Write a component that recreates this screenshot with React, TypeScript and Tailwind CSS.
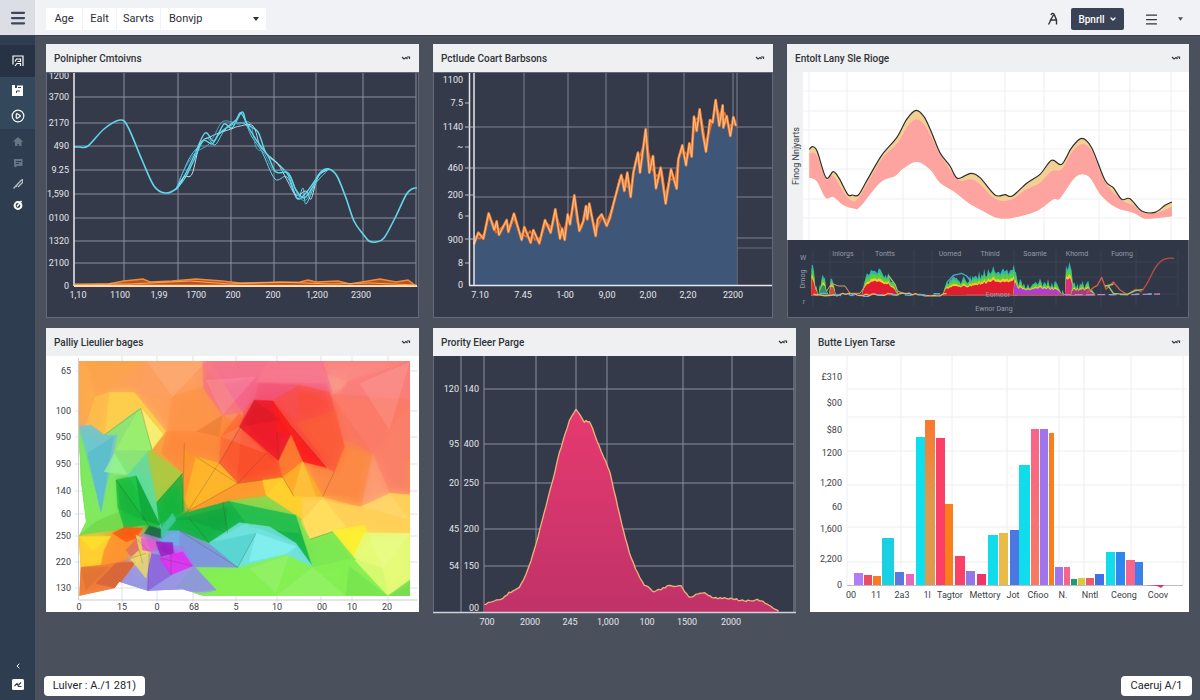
import React from 'react';
import { Menu, CirclePlay, ChevronDown, ChevronLeft } from 'lucide-react';

type Point = [number, number];

// Catmull-Rom spline through the given points
function smooth(pts: Point[]) {
  let d = `M${pts[0][0]},${pts[0][1]}`;
  for (let i = 0; i < pts.length - 1; i++) {
    const p0 = pts[i - 1] || pts[i];
    const p1 = pts[i];
    const p2 = pts[i + 1];
    const p3 = pts[i + 2] || p2;
    d += `C${p1[0] + (p2[0] - p0[0]) / 6},${p1[1] + (p2[1] - p0[1]) / 6} ${p2[0] - (p3[0] - p1[0]) / 6},${p2[1] - (p3[1] - p1[1]) / 6} ${p2[0]},${p2[1]}`;
  }
  return d;
}

const noise = (n: number) => {
  const s = Math.sin(n * 12.9898) * 43758.5453;
  return s - Math.floor(s);
};

function parse(s: string): Point[] {
  return s.split(' ').map((p) => p.split(',').map(Number) as Point);
}

// adds small deterministic steps between points
function rough(pts: Point[], step: number, amp: number): Point[] {
  const out: Point[] = [];
  for (let i = 0; i < pts.length - 1; i++) {
    const [x1, y1] = pts[i];
    const [x2, y2] = pts[i + 1];
    const n = Math.max(1, Math.round((x2 - x1) / step));
    for (let k = 0; k < n; k++) {
      const t = k / n;
      out.push([x1 + (x2 - x1) * t, y1 + (y2 - y1) * t + (noise(x1 + k * 7) - 0.5) * amp]);
    }
  }
  out.push(pts[pts.length - 1]);
  return out;
}

interface PanelProps {
  title: string;
  children: React.ReactNode;
}

function Panel({ title, children }: PanelProps) {
  return (
    <section className="min-w-0">
      <header className="flex h-7 items-center justify-between bg-[#eff0f1] px-2">
        <h2 className="text-[10px] font-medium text-[#2f3238]">{title}</h2>
        <button type="button" aria-label="Collapse" className="text-[#33363c]">
          <svg viewBox="0 0 10 6" className="h-[6px] w-[10px]" fill="none" stroke="currentColor" strokeWidth="1.2">
            <path d="M1 2 L3 4 L5 2.5 L6.5 4 M6 2 H8.5 V4" />
          </svg>
        </button>
      </header>
      {children}
    </section>
  );
}

interface ChartProps {
  box: string;
  label: string;
  dark?: boolean;
  children: React.ReactNode;
}

function Chart({ box, label, dark, children }: ChartProps) {
  return (
    <svg
      viewBox={box}
      role="img"
      aria-label={label}
      className={dark ? 'block h-auto w-full bg-[#353a4a]' : 'block h-auto w-full bg-white'}
    >
      {children}
    </svg>
  );
}

interface GridProps {
  xs: number[];
  ys: number[];
  x1: number;
  x2: number;
  y1: number;
  y2: number;
  color: string;
}

function Grid({ xs, ys, x1, x2, y1, y2, color }: GridProps) {
  return (
    <g stroke={color} strokeWidth="1">
      {xs.map((x) => <line key={`x${x}`} x1={x} x2={x} y1={y1} y2={y2} />)}
      {ys.map((y) => <line key={`y${y}`} x1={x1} x2={x2} y1={y} y2={y} />)}
    </g>
  );
}

interface TicksProps {
  items: [number, string][];
  x?: number;
  y?: number;
  color: string;
}

// pass x for a vertical axis, y for a horizontal one
function Ticks({ items, x, y, color }: TicksProps) {
  return (
    <g fill={color} className="text-[9px]" textAnchor={x !== undefined ? 'end' : 'middle'}>
      {items.map(([pos, text], i) => (
        <text key={i} x={x !== undefined ? x : pos} y={(y !== undefined ? y : pos) + 3}>{text}</text>
      ))}
    </g>
  );
}

const WAVE = parse('74,147 79,147 88,146 104,129 120,120 128,127 142,160 154,186 165,193 176,189 183,180');
const WAVE_MIDS = [
  '176,189 186,173 194,156 205,133 214,141 224,124 232,128 242,112 247,124 258,132 266,153 277,163 288,175 297,198 305,194 314,182 320,173 329,169',
  '176,189 189,159 199,146 207,138 215,145 224,131 234,124 245,124 252,137 262,152 275,179 287,177 297,199 303,188 306,204 316,183 329,169',
  '176,189 184,177 192,174 200,144 210,137 219,133 231,129 240,126 253,126 260,146 267,154 278,164 287,180 296,195 306,191 311,199 318,177 329,169',
  '176,189 183,172 190,160 196,152 208,145 214,136 222,122 232,122 238,124 250,123 256,147 264,153 273,170 282,170 290,175 298,195 306,200 315,184 329,169',
  '176,189 185,178 193,162 203,141 212,144 218,135 226,128 236,120 241,113 249,128 257,141 268,156 276,172 288,173 296,190 304,198 312,188 321,172 329,169',
];
const WAVE_END = parse('316,180 322,171 329,169 337,176 346,198 354,221 363,234 369,241 376,242 384,238 395,218 406,195 412,189 417,188');

function WaveChart() {
  return (
    <Chart box="46 72 373 246" label="Line chart" dark>
      <Grid xs={[124, 178, 231, 274, 316, 363, 416]} ys={[97, 123, 146, 170, 194, 218, 241, 263]} x1={74} x2={416} y1={72} y2={286} color="#8a8f9c" />
      <g fill="none" stroke="#5fd8ec" strokeWidth="1.6" strokeLinejoin="round">
        <path d={smooth(WAVE)} />
        {WAVE_MIDS.map((m, i) => (
          <path key={i} d={smooth(parse(m))} strokeWidth={i === 0 || i === 4 ? 1.4 : 1} stroke={i === 2 ? '#b9dcea' : i === 3 ? '#4aa8c6' : '#5fd8ec'} />
        ))}
        <path d={smooth(WAVE_END)} />
      </g>
      <path d="M74 285 L108 284 L124 281 L143 279 L150 282 L172 281 L196 279 L222 281 L240 283 L300 282 L308 280 L316 282 L338 281 L350 284 L380 279 L396 282 L408 280 L416 286 Z" fill="#b8541f" stroke="#f58b3a" strokeWidth="1.4" />
      <path d="M74 72 V286" fill="none" stroke="#eceef2" strokeWidth="1.5" />
      <path d="M74 286 H417" fill="none" stroke="#ffdcb4" strokeWidth="2" />
      <path d="M74 284 H130 L150 283 L190 281 L230 284 L280 282 L330 284 L370 283 L416 285" fill="none" stroke="#ffa84e" strokeWidth="1" />
      <Ticks x={69} color="#e4e6ec" items={[[76, '1200'], [97, '3700'], [123, '2170'], [146, '490'], [170, '9.25'], [194, '1,590'], [218, '0100'], [241, '1320'], [263, '2100'], [286, '0']]} />
      <Ticks y={295} color="#e4e6ec" items={[[78, '1,10'], [120, '1100'], [159, '1,99'], [196, '1700'], [233, '200'], [273, '200'], [317, '1,200'], [361, '2300']]} />
      <rect x="46.5" y="72.5" width="372" height="245" fill="none" stroke="#646a7a" />
    </Chart>
  );
}

const PEAKS = '132,625 145,590 160,608 176,532 193,582 200,556 207,597 230,552 235,588 252,533 275,612 283,573 302,620 310,582 328,622 345,552 362,590 376,520 390,608 396,578 404,612 413,535 420,565 433,478 448,585 460,555 468,510 472,550 478,503 497,600 503,550 515,535 530,570 540,545 550,505 562,460 574,417 583,465 592,410 602,483 610,410 624,350 630,410 647,280 658,410 669,360 678,457 692,395 707,503 723,400 740,458 745,370 757,328 768,388 778,322 785,362 792,242 800,285 809,220 818,290 828,347 840,252 848,260 857,192 868,270 878,208 880,275 890,240 901,300 910,243 918,270';
const PEAKS_BACK = '132,600 150,608 165,590 176,540 188,560 198,590 214,575 228,560 240,575 252,545 268,590 290,602 300,585 315,612 332,605 348,560 366,575 376,530 386,560 400,590 412,550 424,540 433,490 442,560 455,575 466,540 480,520 488,555 500,580 515,545 532,555 545,520 556,485 568,430 580,430 590,450 604,460 616,380 628,365 640,330 648,300 656,350 666,400 680,420 696,405 706,480 718,430 735,430 748,355 762,345 774,360 786,320 796,250 806,245 815,250 826,320 838,290 850,240 858,210 866,230 874,250 884,230 896,270 906,265 918,255';

function GrowthChart() {
  return (
    <Chart box="433 72 340 246" label="Area chart" dark>
      <Grid xs={[524, 568, 606, 648, 684, 733, 737]} ys={[127, 168, 197, 238]} x1={474} x2={773} y1={72} y2={286} color="#7d8290" />
      <line x1="737" x2="773" y1="248" y2="248" stroke="#676c7b" />
      <g transform="translate(430 36) scale(0.33333)" strokeLinejoin="round">
        <polygon points={`132,748 ${PEAKS} 920,748`} fill="#3e5778" />
        <polyline points={PEAKS_BACK} fill="none" stroke="#e56a24" strokeWidth="5" />
        <polyline points={PEAKS} fill="none" stroke="#ee7d33" strokeWidth="8" />
        <polyline points={PEAKS} fill="none" stroke="#ffc48c" strokeWidth="3" />
      </g>
      <path d="M469.5 72 V285 M474 72 V285 M469 285.5 H773" fill="none" stroke="#e6e8ed" strokeWidth="1.5" />
      <path d="M465 103 H469 M465 127 H474 M465 147 H469 M465 168 H474 M465 195 H474 M465 216 H469 M465 239 H474 M465 263 H469" stroke="#b9bdc7" />
      <Ticks x={463} color="#e4e6ec" items={[[80, '1100'], [103, '7.5'], [127, '1140'], [147, '~'], [168, '460'], [195, '200'], [216, '6'], [240, '900'], [263, '8'], [285, '0']]} />
      <Ticks y={295} color="#e4e6ec" items={[[480, '7.10'], [523, '7.45'], [565, '1-00'], [607, '9,00'], [648, '2,00'], [688, '2,20'], [733, '2200']]} />
      <rect x="433.5" y="72.5" width="339" height="245" fill="none" stroke="#646a7a" />
    </Chart>
  );
}

const RANGE_LINE = parse('88,340 98,332 112,347 138,425 160,407 178,428 203,475 218,477 235,477 260,435 305,358 350,305 380,250 408,223 432,242 455,290 480,350 510,390 533,427 572,412 600,425 645,477 675,476 697,480 740,442 780,415 815,373 845,385 875,335 905,307 935,335 975,433 1000,455 1025,490 1050,488 1085,525 1125,529 1155,508 1176,498');
const RANGE_TOP = parse('88,352 110,358 138,430 160,420 203,484 235,486 305,370 350,325 380,275 408,250 432,265 455,305 480,355 533,430 572,430 600,445 645,488 690,492 740,460 780,440 815,405 845,400 875,350 905,325 935,345 975,438 1025,492 1060,508 1085,528 1125,532 1176,512');
const RANGE_BOTTOM = parse('1176,541 1100,548 1060,530 1010,515 965,480 930,425 905,415 880,430 840,487 820,490 770,525 700,545 650,545 600,520 565,500 520,465 480,440 450,400 410,377 370,397 345,420 300,440 240,512 220,517 190,507 160,483 137,485 110,435 88,425');

function RangeChart() {
  const line = smooth(RANGE_LINE);
  const bottom = smooth(RANGE_BOTTOM).slice(1);
  return (
    <Chart box="787 72 402 168" label="Range chart">
      <Grid xs={[809, 847, 903, 951, 1005, 1044, 1099, 1130, 1171]} ys={[91, 111, 130, 149, 169, 199, 218]} x1={803} x2={1187} y1={72} y2={240} color="#edeff1" />
      <rect x="787" y="72" width="16" height="168" fill="#f0f1f3" />
      <g transform="translate(780 36) scale(0.33333)">
        <path d={`${line} L${bottom} Z`} fill="#f3cf94" />
        <path d={`${smooth(RANGE_TOP)} L${bottom} Z`} fill="#fda3a0" />
        <path d={line} fill="none" stroke="#2e2a2a" strokeWidth="3.5" />
      </g>
      <text x="799" y="156" transform="rotate(-90 799 156)" textAnchor="middle" fill="#3a3d44" className="text-[9px]">Finog Nnjyarts</text>
    </Chart>
  );
}

const BURSTS = [
  { pts: '93,178 95,85 102,120 110,160 114,178', low: '#e02a3c' },
  { pts: '116,178 122,140 132,122 138,150 146,178', low: '#2f8f6a' },
  { pts: '146,178 152,140 160,132 166,165 172,178', low: '#c0504a' },
  { pts: '245,178 252,140 265,120 285,98 300,112 325,118 345,150 356,178', low: '#e01c30' },
  { pts: '488,178 497,145 530,132 570,132 605,118 640,100 665,112 690,106 705,98 712,178', low: '#e01c30' },
  { pts: '700,178 704,105 712,140 740,148 780,140 820,146 840,160 852,178', low: '#b03cd0' },
  { pts: '855,178 858,92 872,92 878,140 888,178', low: '#d8307c' },
  { pts: '872,178 880,150 900,150 925,146 935,165 950,178', low: '#a83a88' },
];
const LAYERS: [string, number, number][] = [
  ['#2fb4b4', 1.05, 26],
  ['#58cf3c', 0.9, 22],
  ['#f0cc32', 0.7, 16],
];

function OverviewChart() {
  return (
    <Chart box="787 240 402 78" label="Overview" dark>
      <rect x="787" y="240" width="402" height="78" fill="#303848" />
      <Grid xs={[813, 830, 863, 914, 932, 1014, 1056, 1101, 1136, 1178]} ys={[262, 277, 294]} x1={813} x2={1178} y1={250} y2={306} color="#3b4353" />
      <g transform="translate(780 236) scale(0.33333)" strokeLinejoin="round">
        {BURSTS.map((b) => (
          <g key={b.pts}>
            {[...LAYERS, [b.low, 0.58, 12] as [string, number, number]].map(([color, share, amp]) => (
              <polygon
                key={color}
                fill={color}
                points={rough(parse(b.pts), 4, amp).map(([x, y]) => `${x},${Math.min(178, 178 - (178 - y) * share)}`).join(' ')}
              />
            ))}
          </g>
        ))}
        <g fill="none" strokeWidth="4">
          <polyline points={rough(parse('100,176 250,176 360,174 480,178 500,172'), 9, 8).map((p) => p.join(',')).join(' ')} stroke="#f0b070" />
          <polyline points="140,165 155,142 175,150 195,150 210,172 240,172 255,150" stroke="#d8a060" strokeWidth="3" />
          <polyline points="325,118 345,145 352,165 375,174" stroke="#9fc860" />
          <polyline points={rough(parse('120,174 240,178 380,174 480,174'), 14, 8).map((p) => p.join(',')).join(' ')} stroke="#58b6e0" strokeDasharray="20 24" />
          <polyline points="500,140 520,118 545,112 560,120 572,135" stroke="#4aa8c6" />
          <polyline points="560,176 700,176 860,176" stroke="#e03c6c" strokeWidth="3" />
          <polyline points="850,176 1040,176 1140,174" stroke="#d07cc8" strokeDasharray="24 10" />
          <polyline points="990,176 1030,175 1125,174" stroke="#68b8dc" strokeDasharray="12 26" />
          <path d="M920 170 L940 155 L952 148 L965 124 L978 160 L1000 138 L1020 162 L1042 176 L1068 160 L1085 168" stroke="#d8584a" />
          <path d="M975 150 L1000 145 M985 150 L1000 172 L1040 176 L1066 164 L1090 160" stroke="#9cc868" />
          <path d="M1085 165 C1110 140 1115 100 1140 78 C1150 68 1165 65 1182 67" stroke="#c04a40" />
        </g>
      </g>
      <g fill="#969ba8" className="text-[7px]" textAnchor="middle">
        <text x="843" y="256">Inlorgs</text>
        <text x="885" y="256">Tontts</text>
        <text x="950" y="256">Uomed</text>
        <text x="990" y="256">Thinid</text>
        <text x="1035" y="256">Soamle</text>
        <text x="1077" y="256">Khomd</text>
        <text x="1122" y="256">Fuomg</text>
        <text x="998" y="297">Eomoor</text>
        <text x="994" y="311">Ewnor Dang</text>
        <text x="803" y="260">W</text>
        <text x="805" y="279" transform="rotate(-90 805 279)">Dmog</text>
        <text x="804" y="304">r</text>
      </g>
      <path d="M787.5 240 V317.5 H1188.5 V240" fill="none" stroke="#646a7a" />
    </Chart>
  );
}

const FACETS: [string, string][] = [
  ['#fda05a', '128,123 520,123 620,280 600,500 380,500 128,330'],
  ['#fdb04a', '128,123 150,123 178,230 128,322'],
  ['#fca64a', '150,123 330,123 178,230'],
  ['#fd9f62', '330,123 512,123 500,200 410,230 300,217'],
  ['#fd9245', '500,200 560,285 480,335 395,335 410,230'],
  ['#fb8a84', '860,123 1122,123 1122,240 1010,400 880,215'],
  ['#f9a08c', '860,160 935,185 890,225'],
  ['#fa7a78', '935,185 1122,125 1122,240 905,235'],
  ['#fb7660', '885,222 1122,240 1010,400 925,380'],
  ['#fb8068', '1122,240 1122,525 1062,520 1010,400'],
  ['#fc9c74', '1010,400 1062,520 975,560'],
  ['#fc8a44', '925,360 1010,400 975,560 860,530 800,425 895,455'],
  ['#f4668a', '500,123 860,123 890,220 790,195 700,243 655,240 610,278 560,285 503,205'],
  ['#f77a90', '500,123 720,125 660,170 570,190 515,160'],
  ['#f98090', '700,123 860,123 870,190 660,185'],
  ['#f45070', '655,240 670,190 790,195 780,300 710,243'],
  ['#fd8433', '390,335 480,335 560,285 615,320 550,430 480,410 440,465 375,400'],
  ['#fc5a30', '610,278 690,400 745,472 605,490 550,430 555,350'],
  ['#fb4d2c', '610,320 728,422 740,472 605,490 550,430'],
  ['#fa4e40', '710,243 790,195 880,215 925,380 895,455 865,440 770,325'],
  ['#fc6038', '780,310 900,270 925,380 895,455'],
  ['#ee1c2a', '655,240 710,243 735,300 765,345 728,422 610,320'],
  ['#fb1c1e', '722,335 765,345 800,425 870,442 770,325 710,243'],
  ['#fd7a30', '728,422 765,345 800,425 740,472'],
  ['#fdd24c', '220,217 295,217 390,335 350,390 315,265 205,345 188,330'],
  ['#fdbe4a', '178,230 220,217 205,345 150,315'],
  ['#f4f478', '315,265 382,345 348,390'],
  ['#f9a23a', '390,335 375,400 440,460 348,390'],
  ['#84e878', '205,345 310,265 348,390 275,465 235,400 240,345'],
  ['#9cf070', '310,265 348,390 240,390'],
  ['#80ea60', '128,330 150,410 195,575 215,450 240,480 262,625 130,640 150,600'],
  ['#6cc8d0', '130,320 165,315 205,345 243,345 232,400 195,575 155,400'],
  ['#5cbccc', '155,400 232,350 195,575'],
  ['#94f292', '235,400 275,465 205,455'],
  ['#62dc9c', '275,465 335,395 365,560 375,625'],
  ['#a8cc40', '335,395 345,390 440,460 362,545'],
  ['#74d84a', '250,575 262,625 130,645 180,605'],
  ['#1abf40', '240,480 300,468 372,615 320,615 265,625 245,560'],
  ['#10a83a', '300,468 372,615 320,600'],
  ['#14b43c', '440,460 442,575 370,612 362,548'],
  ['#fd9630', '445,390 480,410 450,575 440,465'],
  ['#feb628', '480,410 548,430 605,490 460,572 447,540'],
  ['#fd9a2e', '445,580 605,490 740,472 690,530 580,543'],
  ['#ffd02e', '680,480 740,472 770,525 870,550 800,600 690,525'],
  ['#fdac2a', '740,472 800,425 860,530 770,525'],
  ['#fec23c', '800,425 840,530 770,525'],
  ['#12b344', '375,655 410,600 450,578 580,543 640,560 780,585 830,740 780,670 630,608 520,668 430,632'],
  ['#2cc050', '580,543 780,585 790,640 640,620'],
  ['#8cd84c', '580,543 690,528 800,600 780,585'],
  ['#ffd058', '800,535 975,560 1062,520 1122,525 1122,640 890,632 822,658 800,600'],
  ['#ffe060', '860,535 930,620 822,658 800,600'],
  ['#fdf030', '890,632 985,615 1000,650 950,715'],
  ['#e6fb78', '985,640 1122,640 1122,790 1055,828 950,715'],
  ['#d4f870', '950,715 1040,745 1055,828'],
  ['#7ce852', '780,585 822,658 890,635 960,720 830,742'],
  ['#84f052', '478,742 605,742 750,702 830,742 950,715 1055,828 500,828 540,810'],
  ['#78e450', '940,740 1055,828 930,828'],
  ['#74dc50', '1122,780 1122,828 1055,828'],
  ['#70e2de', '520,668 610,608 700,620 780,670 830,740 750,702 605,742'],
  ['#58d4d0', '520,668 660,640 605,742'],
  ['#82f0f0', '660,640 780,680 750,702 640,725'],
  ['#7e97dc', '430,632 530,680 605,742 475,740 430,690 370,660'],
  ['#70b0e8', '370,660 390,632 430,632 430,690'],
  ['#9898e4', '250,785 300,735 340,700 370,690 475,740 540,810 335,812'],
  ['#8c9ad4', '475,740 540,810 420,805'],
  ['#8c64dc', '340,700 370,705 410,762 335,812'],
  ['#a07cf0', '400,675 440,680 475,740 430,700'],
  ['#ffd030', '130,650 225,650 205,690 195,735 135,742'],
  ['#fde02c', '130,650 225,650 170,690'],
  ['#f07c38', '133,742 200,735 300,725 240,805 130,828'],
  ['#d4643a', '240,730 300,725 240,805 180,790'],
  ['#fd9630', '205,690 230,640 290,655 270,720 195,735'],
  ['#fb5a10', '230,640 265,622 320,625 300,655 270,665'],
  ['#e0705c', '270,690 310,650 320,690 290,715'],
  ['#ead86a', '300,645 330,660 345,700 330,775 298,735 282,715 310,690'],
  ['#186844', '340,618 375,628 378,655 325,640'],
  ['#e858d4', '315,655 360,665 350,695 320,690'],
  ['#9c1cc4', '360,665 410,668 412,700 375,710'],
  ['#e22cf0', '370,715 440,695 470,738 405,764'],
  ['#40cc98', '375,625 410,580 420,600 375,655'],
];

// broad colour zones under the facets
const ZONES: [string, string][] = [
  ['#fd9a50', '128,123 620,123 620,500 380,500 128,400'],
  ['#fa7468', '600,123 1122,123 1122,560 600,500'],
  ['#fd9a38', '440,400 1122,420 1122,600 440,600'],
  ['#7de05c', '128,330 350,280 450,560 380,660 128,660'],
  ['#1cb848', '370,540 800,540 830,680 370,680'],
  ['#ffdc50', '790,530 1122,520 1122,660 800,660'],
  ['#8cec58', '470,650 1122,650 1122,828 470,828'],
  ['#fba034', '128,645 320,625 320,740 128,828'],
  ['#9890e0', '250,700 320,640 480,640 545,815 250,815'],
];

const SEAMS = 'M445,370 L440,570 M548,430 L455,575 M605,490 L445,580 M480,410 L605,490 M615,320 L550,430 M728,422 L722,335 M690,400 L605,490 M740,472 L605,490 M770,325 L870,442 M740,472 L775,530 M315,265 L348,390 M362,548 L440,460 M430,632 L605,742 M605,742 L660,640 M460,595 L520,668 M560,545 L575,640 M375,715 L470,738 M405,700 L405,764 M340,700 L335,812 M300,655 L345,700 M282,715 L330,700 M310,690 L320,730 M860,530 L895,455 M822,658 L890,635 M240,480 L340,618 M205,345 L315,265';

function MeshChart() {
  return (
    <Chart box="46 356 373 256" label="Mesh map">
      <defs>
        <filter id="blend">
          <feGaussianBlur stdDeviation="14" />
        </filter>
        <clipPath id="region">
          <polygon points="128,123 1122,123 1122,828 500,828 440,808 335,812 250,785 235,805 130,828 134,742 128,650 150,605 134,480 128,330" />
        </clipPath>
      </defs>
      <Grid xs={[122, 157, 193, 236, 277, 321, 352, 388]} ys={[371, 411, 437, 464, 491, 514, 536, 562, 588]} x1={75} x2={417} y1={356} y2={602} color="#dfe1e4" />
      <g transform="translate(36 320) scale(0.33333)" strokeLinejoin="round">
        <g clipPath="url(#region)">
          {ZONES.map(([color, points]) => <polygon key={points} points={points} fill={color} />)}
          <g filter="url(#blend)">
            {FACETS.map(([color, points]) => <polygon key={points} points={points} fill={color} />)}
          </g>
          {FACETS.map(([color, points], i) => (
            <polygon key={points} points={points} fill={color} stroke={color} strokeWidth="1.5" opacity={i < 21 ? 0.45 : 0.85} />
          ))}
          <g fill="#ffffff" fillOpacity="0.1">
            <polygon points="330,123 512,123 410,230" />
            <polygon points="510,180 660,170 560,285" />
            <polygon points="555,350 610,320 690,400" />
            <polygon points="970,190 1122,125 1060,330" />
            <polygon points="1062,520 1122,600 975,560" />
            <polygon points="1000,650 1122,640 1040,745" />
            <polygon points="640,745 760,705 720,820" />
            <polygon points="830,742 930,828 720,828" />
          </g>
          <g fill="#000000" fillOpacity="0.05">
            <polygon points="245,480 300,560 320,600 250,570" />
            <polygon points="410,600 575,560 570,640 460,600" />
            <polygon points="655,240 735,300 615,320" />
            <polygon points="130,740 220,740 150,810" />
            <polygon points="480,335 560,285 550,350" />
          </g>
          <path d={SEAMS} fill="none" stroke="#4a3a18" strokeOpacity="0.35" strokeWidth="2" />
        </g>
      </g>
      <path d="M78.5 358 V600 H417" fill="none" stroke="#c9ccd1" />
      <Ticks x={71} color="#3b3e45" items={[[371, '65'], [411, '100'], [437, '950'], [464, '950'], [491, '140'], [514, '60'], [536, '250'], [562, '220'], [588, '130']]} />
      <Ticks y={607} color="#3b3e45" items={[[79, '0'], [122, '15'], [157, '0'], [194, '68'], [236, '5'], [277, '10'], [322, '00'], [352, '10'], [387, '20']]} />
    </Chart>
  );
}

const HILL = parse('175,853 225,838 255,815 280,803 300,765 315,720 330,670 360,560 380,480 400,400 430,300 450,267 462,285 475,305 490,303 500,325 520,380 552,455 575,560 610,700 635,760 655,795 685,815 705,807 730,797 765,798 788,833 810,822 830,818 870,835 920,836 960,843 1000,840 1035,858 1058,874');

function HillChart() {
  const edge = rough(HILL, 6, 6).map((p) => p.join(',')).join(' ');
  return (
    <svg viewBox="433 356 363 256" role="img" aria-label="Distribution chart" className="block h-auto w-full overflow-visible bg-[#353a4a]">
      <defs>
        <linearGradient id="hill" x1="0" y1="0" x2="0" y2="1">
          <stop offset="0" stopColor="#e63a70" />
          <stop offset="1" stopColor="#c03268" />
        </linearGradient>
      </defs>
      <Grid xs={[461, 484, 536, 576, 607, 683, 732, 794]} ys={[389, 444, 483, 529, 566]} x1={484} x2={794} y1={356} y2={612} color="#8a8f9c" />
      <g transform="translate(426 320) scale(0.33333)">
        <polygon points={`175,876 ${edge} 1058,876`} fill="url(#hill)" />
        <polyline points={edge} fill="none" stroke="#f0b07c" strokeWidth="4" strokeLinejoin="round" />
      </g>
      <line x1="433" x2="796" y1="612.5" y2="612.5" stroke="#d0d3da" strokeWidth="1.5" />
      <path d="M433.5 356 V612 M795.5 356 V612" stroke="#646a7a" />
      <Ticks x={459} color="#e4e6ec" items={[[389, '120'], [444, '95'], [483, '20'], [529, '45'], [566, '54']]} />
      <Ticks x={479} color="#e4e6ec" items={[[389, '140'], [444, '400'], [483, '250'], [529, '200'], [566, '150'], [608, '00']]} />
      <Ticks y={622} color="#e4e6ec" items={[[487, '700'], [530, '2000'], [570, '245'], [608, '1,000'], [647, '100'], [687, '1500'], [731, '2000']]} />
    </svg>
  );
}

// x, width, top, colour
const BARS: [number, number, number, string][] = [
  [854, 9, 573, '#b07cf8'],
  [864, 8, 575, '#ef4a5e'],
  [873, 8, 576, '#f97a20'],
  [882, 12, 538, '#1cd0e4'],
  [895, 9, 572, '#5a78e0'],
  [906, 8, 574, '#e868c0'],
  [916, 9, 437, '#0ce0ee'],
  [925, 10, 420, 'url(#amber)'],
  [936, 9, 438, '#fb4068'],
  [945, 8, 504, '#fb7e1c'],
  [955, 10, 556, '#fb4068'],
  [966, 9, 571, '#9078e8'],
  [977, 9, 574, '#f03468'],
  [988, 10, 535, '#10dcec'],
  [999, 9, 533, '#e8bc48'],
  [1010, 9, 530, '#4a78e0'],
  [1019, 11, 465, '#10dcec'],
  [1031, 8, 429, 'url(#coral)'],
  [1040, 8, 429, '#a074ea'],
  [1049, 5, 433, '#fb7e1c'],
  [1055, 8, 567, '#a074ea'],
  [1064, 6, 567, '#f9648a'],
  [1071, 6, 579, '#18a070'],
  [1078, 7, 578, '#dcc840'],
  [1086, 8, 578, '#ef5a68'],
  [1095, 9, 574, '#4070e8'],
  [1106, 9, 552, '#10dcec'],
  [1116, 9, 552, '#2c88f0'],
  [1126, 9, 560, '#f9648a'],
  [1135, 8, 562, '#3c80ec'],
];

function BarChart() {
  return (
    <Chart box="810 356 379 256" label="Bar chart">
      <defs>
        <linearGradient id="amber" x1="0" y1="0" x2="0" y2="1">
          <stop offset="0" stopColor="#fb7830" />
          <stop offset="0.5" stopColor="#de9850" />
        </linearGradient>
        <linearGradient id="coral" x1="0" y1="0" x2="0" y2="1">
          <stop offset="0" stopColor="#f9648a" />
          <stop offset="1" stopColor="#f97a60" />
        </linearGradient>
      </defs>
      <Grid xs={[847, 901, 952, 1007, 1059, 1084, 1131, 1183]} ys={[389, 417, 451, 485, 527, 562]} x1={847} x2={1187} y1={356} y2={585} color="#eceef0" />
      {BARS.map(([x, w, top, color]) => <rect key={x} x={x} y={top} width={w} height={585 - top} fill={color} />)}
      <path d="M847 585.5 H1183" stroke="#b9bcc2" />
      <path d="M1146 585 H1164 L1161 588 L1157 586 Z" fill="#e03468" />
      <Ticks x={842} color="#3b3e45" items={[[377, '£310'], [403, '$00'], [430, '$80'], [453, '1200'], [483, '1,200'], [507, '60'], [529, '1,600'], [559, '2,200'], [585, '0']]} />
      <Ticks y={595} color="#3b3e45" items={[[851, '00'], [876, '11'], [902, '2a3'], [927, '1l'], [950, 'Tagtor'], [985, 'Mettory'], [1013, 'Jot'], [1038, 'Cfioo'], [1063, 'N.'], [1090, 'Nntl'], [1124, 'Ceong'], [1158, 'Coov']]} />
    </Chart>
  );
}

function Sidebar() {
  return (
    <aside className="flex w-[35px] shrink-0 flex-col bg-[#2e3e50] pt-[9px] text-white">
      <button type="button" aria-label="Dashboard" className="flex h-8 items-center justify-center bg-[#273344]">
        <svg viewBox="0 0 12 12" className="size-3" fill="none" stroke="currentColor" strokeWidth="1.2">
          <path d="M1 9.5 V1 H11 V11 M3 11 L5 8.5 H8.5 V11 M3 6.5 L4.5 4 H8.5 V6.5 H5.5" />
        </svg>
      </button>
      <div className="flex flex-col bg-[#33485a]">
        <button type="button" aria-label="Save" className="flex h-[26px] items-center justify-center">
          <svg viewBox="0 0 11 11" className="size-[11px]">
            <path d="M0 0 H3 V3 H5 V0.5 H11 V11 H0 Z" fill="currentColor" />
            <path d="M6 2.5 H9 M4.5 6 H8 M4.5 6 V8" stroke="#33485a" strokeWidth="1" fill="none" />
          </svg>
        </button>
        <button type="button" aria-label="Play" className="flex h-[26px] items-center justify-center">
          <CirclePlay className="size-[14px]" />
        </button>
      </div>
      <nav className="flex flex-col pt-[2px]">
        <button type="button" aria-label="Home" className="flex h-[21px] items-center justify-center text-[#657584]">
          <svg viewBox="0 0 10 10" className="size-[10px]" fill="currentColor">
            <path d="M5 0 L10 4.5 L8.5 5 V9 H6 V7 H4.5 V9 H2 V5 L0 4.5 Z" />
          </svg>
        </button>
        <button type="button" aria-label="Messages" className="flex h-[21px] items-center justify-center text-[#657584]">
          <svg viewBox="0 0 10 10" className="size-[10px]">
            <path d="M1 1 H9.5 V8 H4 L2.5 9.5 L1 8 Z" fill="currentColor" />
            <path d="M3 3.5 H8 M3 5.5 H6" stroke="#2e3e50" strokeWidth="1" />
          </svg>
        </button>
        <button type="button" aria-label="Edit" className="flex h-[21px] items-center justify-center text-[#b4bcc6]">
          <svg viewBox="0 0 10 10" className="size-[10px]" fill="none" stroke="currentColor" strokeWidth="1.3">
            <path d="M0.5 9.5 L8 1.5 L9.5 0.5 V3.5 L5 8 M5 4.5 L3 8" />
          </svg>
        </button>
        <button type="button" aria-label="Disable" className="flex h-[21px] items-center justify-center">
          <svg viewBox="0 0 10 10" className="size-[10px]" fill="none" stroke="currentColor" strokeWidth="2">
            <circle cx="5" cy="5.5" r="3.4" />
            <path d="M4 6.5 L8.5 1" strokeWidth="1.4" />
          </svg>
        </button>
      </nav>
      <div className="mt-auto flex flex-col pb-[7px]">
        <button type="button" aria-label="Back" className="flex h-[18px] items-center justify-center">
          <ChevronLeft className="size-2" strokeWidth={3} />
        </button>
        <button type="button" aria-label="Images" className="flex h-[18px] items-center justify-center">
          <svg viewBox="0 0 12 11" className="h-[11px] w-3">
            <rect width="12" height="11" rx="1.5" fill="currentColor" />
            <path d="M2.5 7 L5 4.5 L6 6.5 L9 3.5 M6 7.5 H9.5" fill="none" stroke="#2e3e50" strokeWidth="1.2" />
          </svg>
        </button>
      </div>
    </aside>
  );
}

function TopBar() {
  return (
    <header className="flex h-9 border-b border-[#3a4152] bg-[#f1f2f5] text-[11px] text-[#2b2e35]">
      <button type="button" aria-label="Menu" className="flex w-[35px] shrink-0 items-center justify-center bg-[#dcdee5] text-[#3d4759]">
        <Menu className="size-[18px]" strokeWidth={3} />
      </button>
      <div className="flex flex-1 items-center pt-[3px] pr-[17px] pl-[11px]">
        <nav className="flex h-[22px] gap-px">
          <button type="button" className="w-9 bg-white">Age</button>
          <button type="button" className="w-[33px] bg-white">Ealt</button>
          <button type="button" className="w-[43px] bg-white">Sarvts</button>
          <div className="relative">
            <select aria-label="Group" className="h-full w-[105px] appearance-none bg-white pl-2 outline-none">
              <option>Bonvjp</option>
            </select>
            <svg viewBox="0 0 6 4" className="pointer-events-none absolute top-1/2 right-[7px] h-1 w-[6px] -translate-y-1/2 fill-[#2b2e35]">
              <path d="M0 0 H6 L3 4 Z" />
            </svg>
          </div>
        </nav>
        <button type="button" aria-label="Account" className="mr-3 ml-auto">
          <svg viewBox="0 0 12 14" className="h-[14px] w-3" fill="none" stroke="#2f333b" strokeWidth="1.4">
            <path d="M4 3 Q5 0.5 7 2 L9.5 8 V12.5 M6.5 3 L3.5 8 H9 M4 8 L1.5 12.5" />
          </svg>
        </button>
        <button type="button" className="flex h-[22px] w-[53px] items-center justify-center gap-1 rounded-xs bg-[#3a4256] text-[10px] font-medium text-white">
          Bpnrll
          <ChevronDown className="size-2" strokeWidth={4} />
        </button>
        <button type="button" aria-label="Options" className="ml-5 text-[#33363e]">
          <Menu className="size-[15px]" strokeWidth={2} />
        </button>
        <button type="button" aria-label="More" className="ml-[19px]">
          <svg viewBox="0 0 6 4" className="h-1 w-[5px] fill-[#4a4e58]">
            <path d="M0 0 H6 L3 4 Z" />
          </svg>
        </button>
      </div>
    </header>
  );
}

export default function App() {
  return (
    <div className="flex min-h-screen flex-col bg-[#4b505d] font-['Roboto','Liberation_Sans',sans-serif]">
      <TopBar />
      <div className="flex flex-1">
        <Sidebar />
        <main className="flex min-w-0 flex-1 flex-col pt-2">
          <div className="flex flex-col gap-[10px] px-[11px]">
            <div className="grid grid-cols-[373fr_340fr_402fr] items-start gap-[14px]">
              <Panel title="Polnipher Cmtoivns"><WaveChart /></Panel>
              <Panel title="Pctlude Coart Barbsons"><GrowthChart /></Panel>
              <Panel title="Entolt Lany Sle Rioge">
                <RangeChart />
                <OverviewChart />
              </Panel>
            </div>
            <div className="grid grid-cols-[373fr_363fr_379fr] items-start gap-[14px]">
              <Panel title="Palliy Lieulier bages"><MeshChart /></Panel>
              <Panel title="Prority Eleer Parge"><HillChart /></Panel>
              <Panel title="Butte Liyen Tarse"><BarChart /></Panel>
            </div>
          </div>
          <footer className="mt-auto flex items-end justify-between pr-2 pb-1 pl-[9px] text-[11px] text-[#24272d]">
            <button type="button" className="h-5 w-[101px] rounded-sm bg-white">Lulver : A./1 281)</button>
            <button type="button" className="h-5 w-[71px] rounded-sm bg-white">Caeruj A/1</button>
          </footer>
        </main>
      </div>
    </div>
  );
}
